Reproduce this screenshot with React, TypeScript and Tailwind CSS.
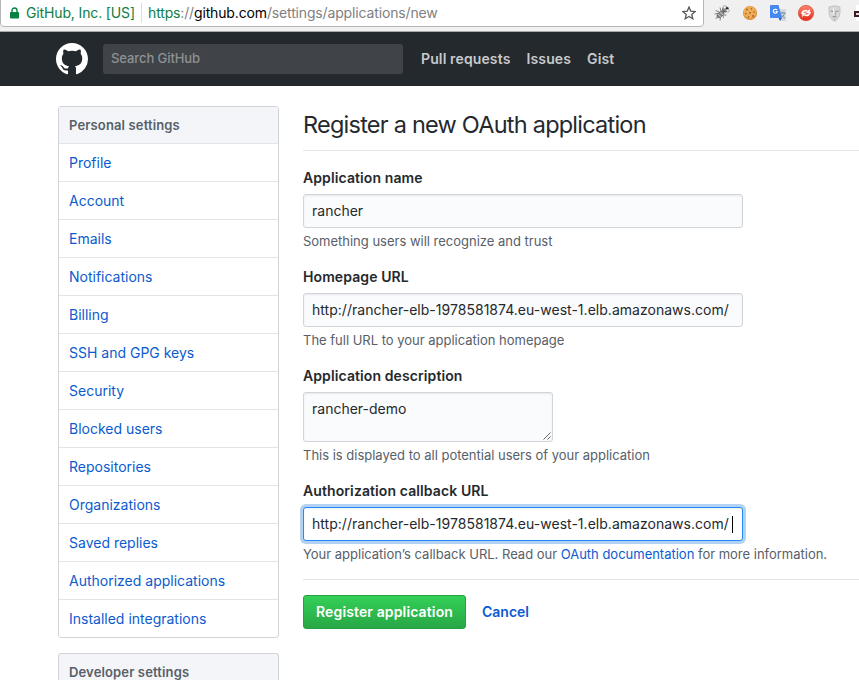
import React from "react";

const links = [
  "Profile",
  "Account",
  "Emails",
  "Notifications",
  "Billing",
  "SSH and GPG keys",
  "Security",
  "Blocked users",
  "Repositories",
  "Organizations",
  "Saved replies",
  "Authorized applications",
  "Installed integrations",
];

function BugIcon() {
  return (
    <svg width="16" height="16" viewBox="0 0 16 16" fill="none" stroke="#666" strokeWidth="0.800">
      <path d="M1.500 5.500l4 1.500M.5 9l5-1M1.500 14l4-4M6 15.500l.8-5M9.500 13l-1-4M12.500 10H8M6 2.500l1 4M12 5l3 1.500" />
      <ellipse cx="6.500" cy="9.300" rx="4.300" ry="2.200" transform="rotate(-43 6.500 9.300)" fill="#8a8a8a" />
      <circle cx="11.300" cy="4.300" r="2.700" fill="#8a8a8a" stroke="#444" />
      <circle cx="10.700" cy="2.200" r="1.600" fill="#f5f5f5" stroke="#999" />
      <circle cx="13.800" cy="5.600" r="1.500" fill="#f5f5f5" stroke="#999" />
      <path d="M12 3.200h2.500" stroke="#222" strokeWidth="1.600" />
      <path d="M4 9l3 3M6 7l3 3" stroke="#ccc" />
    </svg>
  );
}

function CookieIcon() {
  return (
    <svg width="16" height="16" viewBox="0 0 16 16">
      <circle cx="8" cy="8" r="7" fill="#d88a35" />
      <circle cx="7.800" cy="7.400" r="6.200" fill="#f0ad58" />
      <g fill="#9a5a20">
        <circle cx="5" cy="4.500" r="0.900" />
        <circle cx="9.500" cy="3.800" r="0.700" />
        <circle cx="12" cy="7" r="0.800" />
        <circle cx="8" cy="7.800" r="0.900" />
        <circle cx="3.800" cy="8.800" r="0.800" />
        <circle cx="6.500" cy="12" r="0.800" />
        <circle cx="11" cy="11" r="0.900" />
      </g>
    </svg>
  );
}

function TranslateIcon() {
  return (
    <svg width="16" height="16" viewBox="0 0 16 16">
      <path d="M6 4h9a1 1 0 011 1v10a1 1 0 01-1 1h-4.500z" fill="#d5d8dc" />
      <path d="M10 8h5.500M12.700 6.800V8M14.500 8c-.4 2.500-2 4-4 5M11 9.500c.8 1.500 2 2.700 4 3.500" stroke="#6f9199" strokeWidth="1" fill="none" />
      <path d="M1 0h7.500l3.500 13H1a1 1 0 01-1-1V1a1 1 0 011-1z" fill="#4688f1" />
      <path d="M8.500 13H12l-2 3z" fill="#3164c5" />
      <path d="M7 5.100A2 2 0 107.300 6.700H5.600" stroke="#fff" strokeWidth="1.200" fill="none" />
    </svg>
  );
}

function RefreshBadge() {
  return (
    <svg width="18" height="18" viewBox="0 0 18 18">
      <defs>
        <linearGradient id="red" x1="0" y1="0" x2="0" y2="1">
          <stop offset="0" stopColor="#ff8472" />
          <stop offset="1" stopColor="#e32a1a" />
        </linearGradient>
      </defs>
      <circle cx="9" cy="9" r="7.700" fill="url(#red)" stroke="#d9412f" strokeWidth="0.600" />
      <path d="M4.900 10C5.200 7.200 7.500 6 10.500 7M13.100 8C12.800 10.800 10.500 12 7.500 11" stroke="#fff" strokeWidth="1.700" fill="none" />
      <path d="M12.800 4.800v4.400H8.700zM5.200 13.200V8.800h4.100z" fill="#fff" />
    </svg>
  );
}

function MaskIcon() {
  return (
    <svg width="13" height="17" viewBox="0 0 13 17">
      <path d="M1 2Q6.500-.5 12 2v5c0 4-2 7.500-5.500 9.500C3 14.500 1 11 1 7z" fill="#d8d8d8" stroke="#bbb" strokeWidth="0.800" />
      <path d="M2.500 6l3 .5M10.500 6l-3 .5M4.500 12q2-1 4 0" stroke="#8e8e8e" strokeWidth="1.200" fill="none" />
      <path d="M7.500 7v3.500M6.500 13.500v1.500" stroke="#a8a8a8" strokeWidth="1" />
      <path d="M5.500 3v7" stroke="#eee" strokeWidth="1" />
    </svg>
  );
}

function BrowserBar() {
  return (
    <div className="relative h-8 shrink-0 overflow-hidden border-b border-[#a9a9a9] bg-[#f0f0f0]">
      <div className="-mt-1 flex h-[31px] w-[704px] items-center rounded-[4px] border border-[#b5b5b5] bg-white pt-[2px] text-[14px]">
        <svg className="ml-[9px]" width="9" height="12" viewBox="0 0 9 12">
          <path d="M2 6V3.500a2.500 2.500 0 015 0V6" stroke="#0b8043" strokeWidth="1.400" fill="none" />
          <rect x="0" y="5" width="9" height="6.500" rx="0.700" fill="#0b8043" />
        </svg>
        <span className="ml-[7px] w-[115px] whitespace-nowrap tracking-[-0.14px] text-[#0b8043]">GitHub, Inc. [US]</span>
        <span className="h-5 w-px bg-[#dedede]" />
        <span className="ml-[6px] whitespace-nowrap tracking-[-0.15px] text-[#808080]">
          <span className="text-[#0b8043]">https</span>://<span className="text-black">github.com</span>/settings/applications/new
        </span>
        <svg className="ml-auto mr-[7px]" width="14" height="14" viewBox="0 0 14 14">
          <path d="M7 1l1.700 4.100 4.500.4-3.400 2.900 1 4.400L7 10.500l-3.800 2.300 1-4.400L.8 5.500l4.500-.4z" fill="none" stroke="#5a5a5a" strokeWidth="1.300" />
        </svg>
      </div>
      <div className="absolute left-[714px] top-[5px]"><BugIcon /></div>
      <div className="absolute left-[742px] top-[5px]"><CookieIcon /></div>
      <div className="absolute left-[770px] top-[5px]"><TranslateIcon /></div>
      <div className="absolute left-[797px] top-[4px]"><RefreshBadge /></div>
      <div className="absolute left-[828px] top-[5px]"><MaskIcon /></div>
      <svg className="absolute left-[854px] top-[5px]" width="5" height="16" viewBox="0 0 5 16">
        <path d="M2 0h3v16H2z" fill="#fff" />
        <path d="M0 6h5v6H0z" fill="#3b1c20" />
        <path d="M2 8h3v2H2z" fill="#ddd" />
      </svg>
    </div>
  );
}

function Header() {
  return (
    <header className="flex h-[54px] shrink-0 items-center bg-[#24292e] pl-14 text-[14px] font-semibold text-[#c8c9cb]">
      <svg width="32" height="32" viewBox="0 0 16 16" fill="#fff">
        <path fillRule="evenodd" d="M8 0C3.580 0 0 3.580 0 8c0 3.540 2.290 6.530 5.470 7.590.4.070.55-.17.55-.38 0-.19-.01-.82-.01-1.490-2.010.37-2.530-.49-2.690-.94-.09-.23-.48-.94-.82-1.130-.28-.15-.68-.52-.01-.53.630-.01 1.080.58 1.230.82.720 1.210 1.870.87 2.330.66.070-.52.280-.87.510-1.070-1.780-.2-3.640-.89-3.640-3.950 0-.87.310-1.590.820-2.150-.08-.2-.36-1.020.080-2.120 0 0 .67-.21 2.200.82.640-.18 1.320-.27 2-.27s1.360.09 2 .27c1.530-1.040 2.200-.82 2.200-.82.440 1.100.160 1.920.080 2.120.510.560.820 1.270.820 2.150 0 3.070-1.870 3.750-3.650 3.950.290.25.540.73.540 1.480 0 1.070-.01 1.930-.01 2.200 0 .21.150.46.550.38A8.010 8.010 0 0016 8c0-4.420-3.580-8-8-8z" />
      </svg>
      <div className="ml-[15px] flex h-[30px] w-[300px] items-center rounded-[3px] bg-[#404448] px-2 pb-px text-[13px] font-medium tracking-[-0.08px] text-[#8f9194]">
        Search GitHub
      </div>
      <nav className="ml-[18px] flex gap-4 pb-[2px] tracking-[0.13px]">
        <span>Pull requests</span>
        <span>Issues</span>
        <span>Gist</span>
      </nav>
    </header>
  );
}

function Sidebar() {
  return (
    <aside className="w-[221px] shrink-0 text-[14px] leading-[21px]">
      <div className="rounded-[3px] border border-[#d1d5da]">
        <h3 className="h-[36px] rounded-t-[2px] bg-[#f3f5f8] px-[10px] pt-[8px] text-[13px] font-semibold tracking-[0.14px] text-[#586069]">Personal settings</h3>
        {links.map((link) => (
          <a key={link} className="block h-[38px] border-t border-[#e1e4e8] px-[10px] pt-[8px] text-[#0a5bd0]">
            {link}
          </a>
        ))}
      </div>
      <div className="mt-[15px] h-10 rounded-t-[3px] border border-b-0 border-[#d1d5da] bg-[#f3f5f8] px-[10px] pt-[8px] text-[13px] font-semibold tracking-[0.14px] text-[#586069]">
        Developer settings
      </div>
    </aside>
  );
}

const box = "rounded-[3px] border border-[#d1d5da] bg-[#fafbfc] px-2 shadow-[inset_0_1px_2px_rgba(27,31,35,0.075)] whitespace-nowrap";

function Field({ label, note, children }: { label: string; note: React.ReactNode; children: React.ReactNode }) {
  return (
    <div className="mb-[14px]">
      <div className="mb-[6px] h-[21px] text-[14px] font-semibold leading-[21px] tracking-[0.1px]">{label}</div>
      {children}
      <p className="mt-[4px] h-[20px] whitespace-nowrap text-[13px] leading-[19px] tracking-[-0.01px] text-[#586069]">{note}</p>
    </div>
  );
}

export default function App() {
  return (
    <div className="flex h-[680px] w-[859px] flex-col overflow-hidden bg-white font-[Inter,sans-serif] text-[#24292e]">
      <BrowserBar />
      <Header />
      <div className="flex min-h-0 flex-1 gap-6 pl-[58px] pt-5">
        <Sidebar />
        <main className="min-w-0 flex-1">
          <h2 className="mb-[16px] h-[45px] whitespace-nowrap border-b border-[#e1e4e8] text-[23.5px] leading-[38px] tracking-[-0.77px]">
            Register a new OAuth application
          </h2>
          <Field label="Application name" note="Something users will recognize and trust">
            <div className={`${box} h-[34px] w-[440px] text-[14px] leading-[32px]`}>rancher</div>
          </Field>
          <Field label="Homepage URL" note="The full URL to your application homepage">
            <div className={`${box} h-[34px] w-[440px] text-[14px] leading-[32px] tracking-[0.025px]`}>
              http://rancher-elb-1978581874.eu-west-1.elb.amazonaws.com/
            </div>
          </Field>
          <Field label="Application description" note="This is displayed to all potential users of your application">
            <div className={`${box} relative h-[50px] w-[250px] text-[14px] leading-[32px]`}>
              rancher-demo
              <svg className="absolute bottom-px right-px" width="8" height="8" viewBox="0 0 8 8" stroke="#555" strokeWidth="0.900">
                <path d="M0.500 7.500l7-7M4.500 7.500l3-3" />
              </svg>
            </div>
          </Field>
          <Field
            label="Authorization callback URL"
            note={
              <>
                Your application’s callback URL. Read our <a className="text-[#0a5bd0]">OAuth documentation</a> for more information.
              </>
            }
          >
            <div className="flex h-[34px] w-[440px] items-center whitespace-nowrap rounded-[3px] border border-[#2188ff] bg-white px-2 text-[14px] leading-[32px] tracking-[0.025px] shadow-[inset_0_1px_2px_rgba(27,31,35,0.075),0_0_0_3px_rgba(3,102,214,0.3)]">
              http://rancher-elb-1978581874.eu-west-1.elb.amazonaws.com/
              <span className="ml-[3px] h-[17px] w-px bg-black" />
            </div>
          </Field>
          <div className="flex items-center gap-4 border-t border-[#e1e4e8] pt-[15px] text-[14px] font-semibold">
            <button className="h-[34px] w-[163px] whitespace-nowrap rounded-[3px] border border-[#279f43] bg-linear-to-b from-[#34d058] to-[#28a745] pb-[2px] tracking-[0.13px] text-white">
              Register application
            </button>
            <a className="pb-[2px] text-[#0a5bd0]">Cancel</a>
          </div>
        </main>
      </div>
    </div>
  );
}
